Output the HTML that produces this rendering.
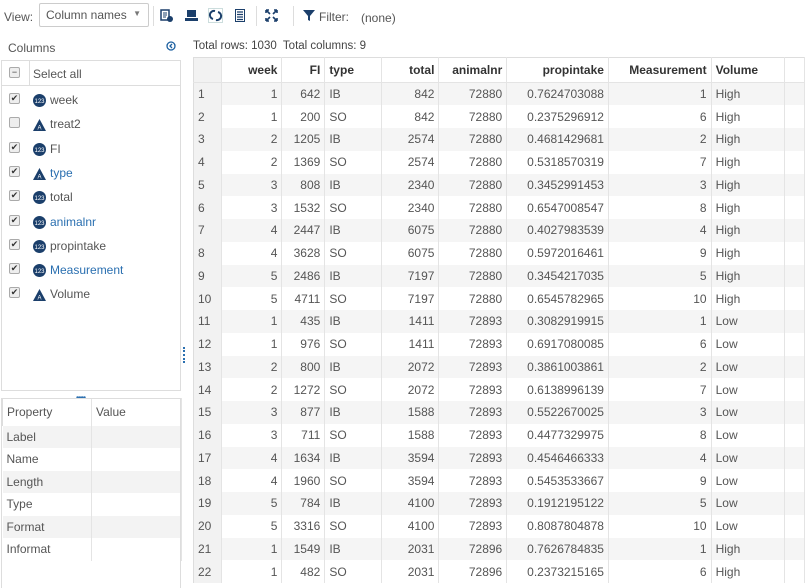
<!DOCTYPE html>
<html><head><meta charset="utf-8"><style>
*{box-sizing:border-box;margin:0;padding:0}
body{width:805px;height:584px;overflow:hidden;background:#fff;font-family:"Liberation Sans",sans-serif;font-size:12px;color:#555;position:relative}
.a{position:absolute}
.sep{position:absolute;top:6px;width:1px;height:20px;background:#ddd}
.ico{position:absolute;top:9px;width:13px;height:13px}
.cb{position:absolute;left:9px;width:11px;height:11px;border:1px solid #aaa;border-radius:2px;background:#eee;font-size:9px;line-height:9px;text-align:center;color:#333}
.li{position:absolute;left:33px;height:16px;line-height:16px;font-size:12px;white-space:nowrap}
.li svg{vertical-align:-3px;margin-right:4px}
.blue{color:#2a6fb0}
table{border-collapse:collapse;table-layout:fixed}
#g{position:absolute;left:193px;top:57px}
#g td,#g th{height:22.75px;border-right:1px solid #e4e4e4;padding:0 4px;white-space:nowrap;overflow:hidden;font-size:12px}
#g th{height:25px;color:#333;font-weight:bold;text-align:right;border-top:1px solid #ddd;border-bottom:1px solid #e4e4e4;background:#fff}
#g td{text-align:right}
#g td:first-child,#g th:first-child{text-align:left;background:#f2f2f2;border-left:1px solid #ddd}
#g td.l,#g th.l{text-align:left}
#g tr.o td{background:#f5f5f5}
#g tr.o td:first-child{background:#f2f2f2}
#p{position:absolute;left:2px;top:398px;width:179px}
#p td{height:22.5px;padding:0 4px;border-right:1px solid #e4e4e4;font-size:12px;color:#555}
#p tr.o td{background:#f3f3f3}
</style></head><body>
<div class="a" style="left:4px;top:10px;font-size:12px;color:#555">View:</div>
<div class="a" style="left:39px;top:3px;width:110px;height:24px;border:1px solid #ccc;border-radius:2px;padding:4px 6px;color:#555">Column names<span class="a" style="right:7px;top:5px;font-size:8px;color:#777">▼</span></div>
<div class="sep" style="left:153px"></div>
<svg class="ico" style="left:160px" viewBox="0 0 13 13"><rect x="1" y="1" width="8" height="10" fill="none" stroke="#1b3f6b" stroke-width="1.5"/><path d="M3 4h4M3 6h4M3 8h3" stroke="#1b3f6b"/><circle cx="10" cy="10" r="3" fill="#1b3f6b"/></svg>
<svg class="ico" style="left:185px" viewBox="0 0 13 13"><rect x="2" y="1" width="9" height="7" fill="#1b3f6b"/><rect x="0" y="9" width="13" height="3" fill="#1b3f6b"/></svg>
<svg class="ico" style="left:208px;width:15px;height:15px;top:8px" viewBox="0 0 15 15"><rect x=".5" y=".5" width="14" height="14" fill="none" stroke="#9bb" stroke-dasharray="1 1"/><path d="M7 3a4 4 0 0 0-2 8M8 12a4 4 0 0 0 2-8" fill="none" stroke="#1b3f6b" stroke-width="2"/></svg>
<svg class="ico" style="left:235px;width:10px" viewBox="0 0 10 13"><rect x=".5" y=".5" width="9" height="12" fill="none" stroke="#1b3f6b"/><path d="M2 3h6M2 5.5h6M2 8h6M2 10.5h6" stroke="#1b3f6b" stroke-width="1.3"/></svg>
<div class="sep" style="left:256px"></div>
<svg class="ico" style="left:265px" viewBox="0 0 13 13"><path d="M1 1l4 4M1 1v3M1 1h3M12 1l-4 4M12 1v3M12 1h-3M1 12l4-4M1 12v-3M1 12h3M12 12l-4-4M12 12v-3M12 12h-3" stroke="#1b3f6b" stroke-width="1.6" fill="none"/></svg>
<div class="sep" style="left:293px"></div>
<svg class="ico" style="left:303px;width:12px" viewBox="0 0 12 13"><path d="M0 1h12L7 7v5L5 11V7z" fill="#1b3f6b"/></svg>
<div class="a" style="left:319px;top:10px">Filter:</div>
<div class="a" style="left:361px;top:11px">(none)</div>

<div class="a" style="left:8px;top:41px">Columns</div>
<svg class="a" style="left:166px;top:41px" width="10" height="10" viewBox="0 0 10 10"><circle cx="5" cy="5" r="4" fill="none" stroke="#1b5fa0" stroke-width="1.3"/><path d="M6 3L4 5l2 2" fill="none" stroke="#1b5fa0" stroke-width="1.3"/></svg>
<div class="a" style="left:193px;top:40px;font-size:11.5px;color:#444">Total rows: 1030&nbsp; Total columns: 9</div>

<div class="a" style="left:1px;top:60px;width:180px;height:331px;border:1px solid #ddd"></div>
<div class="a" style="left:1px;top:60px;width:180px;height:26px;border-bottom:1px solid #ddd"></div>
<div class="a" style="left:29px;top:61px;width:1px;height:25px;background:#ddd"></div>
<div class="cb" style="top:67px">−</div>
<div class="li" style="top:66px">Select all</div>
<div id="list"></div>
<div class="a" style="left:76px;top:393px;font-size:8px;color:#2a6fb0;letter-spacing:-1px">•••••</div>
<div class="a" style="left:183px;top:347px;width:2px;height:16px;border-left:2px dotted #2a6fb0"></div>

<table id="p">
<colgroup><col style="width:89px"><col style="width:90px"></colgroup>
<tr style="height:27px"><td style="border-top:1px solid #ddd;border-left:1px solid #ddd">Property</td><td style="border-top:1px solid #ddd">Value</td></tr>
<tr class="o"><td>Label</td><td></td></tr><tr><td>Name</td><td></td></tr><tr class="o"><td>Length</td><td></td></tr><tr><td>Type</td><td></td></tr><tr class="o"><td>Format</td><td></td></tr><tr><td>Informat</td><td></td></tr>
</table>
<div class="a" style="left:1px;top:398px;width:180px;height:190px;border:1px solid #ddd;border-bottom:none"></div>

<table id="g">
<colgroup><col style="width:28px"><col style="width:61px"><col style="width:43px"><col style="width:57px"><col style="width:58px"><col style="width:68px"><col style="width:102px"><col style="width:103px"><col style="width:74px"><col style="width:20px"></colgroup>
<tbody id="gb"><tr><th></th><th>week</th><th>FI</th><th class="l">type</th><th>total</th><th>animalnr</th><th>propintake</th><th>Measurement</th><th class="l">Volume</th><th></th></tr></tbody>
</table>
<script>
var L=[["week",0,0],["treat2",1,0],["FI",0,0],["type",1,1],["total",0,0],["animalnr",0,1],["propintake",0,0],["Measurement",0,1],["Volume",1,0]];
var h="";L.forEach(function(c,i){var y=92+i*24.3;var un=c[0]=="treat2";
var ic=c[1]?'<svg width="13" height="12" viewBox="0 0 13 12"><path d="M6.5 0L13 12H0z" fill="#1b3f6b"/><text x="6.5" y="10.5" font-size="6" fill="#fff" text-anchor="middle" font-family="Liberation Sans">A</text></svg>':'<svg width="13" height="13" viewBox="0 0 13 13"><circle cx="6.5" cy="6.5" r="6.5" fill="#1b3f6b"/><text x="6.5" y="9" font-size="6" fill="#fff" text-anchor="middle" font-family="Liberation Sans">123</text></svg>';
h+='<div class="cb" style="top:'+(y+1)+'px">'+(un?'':'✔')+'</div><div class="li'+(c[2]?' blue':'')+'" style="top:'+y+'px">'+ic+c[0]+'</div>';});
document.getElementById("list").innerHTML=h;
var D=[[1,642,"IB",842,72880,"0.7624703088",1,"High"],[1,200,"SO",842,72880,"0.2375296912",6,"High"],[2,1205,"IB",2574,72880,"0.4681429681",2,"High"],[2,1369,"SO",2574,72880,"0.5318570319",7,"High"],[3,808,"IB",2340,72880,"0.3452991453",3,"High"],[3,1532,"SO",2340,72880,"0.6547008547",8,"High"],[4,2447,"IB",6075,72880,"0.4027983539",4,"High"],[4,3628,"SO",6075,72880,"0.5972016461",9,"High"],[5,2486,"IB",7197,72880,"0.3454217035",5,"High"],[5,4711,"SO",7197,72880,"0.6545782965",10,"High"],[1,435,"IB",1411,72893,"0.3082919915",1,"Low"],[1,976,"SO",1411,72893,"0.6917080085",6,"Low"],[2,800,"IB",2072,72893,"0.3861003861",2,"Low"],[2,1272,"SO",2072,72893,"0.6138996139",7,"Low"],[3,877,"IB",1588,72893,"0.5522670025",3,"Low"],[3,711,"SO",1588,72893,"0.4477329975",8,"Low"],[4,1634,"IB",3594,72893,"0.4546466333",4,"Low"],[4,1960,"SO",3594,72893,"0.5453533667",9,"Low"],[5,784,"IB",4100,72893,"0.1912195122",5,"Low"],[5,3316,"SO",4100,72893,"0.8087804878",10,"Low"],[1,1549,"IB",2031,72896,"0.7626784835",1,"High"],[1,482,"SO",2031,72896,"0.2373215165",6,"High"]];
var r="";D.forEach(function(d,i){r+='<tr'+(i%2==0?' class="o"':'')+'><td>'+(i+1)+'</td><td>'+d[0]+'</td><td>'+d[1]+'</td><td class="l">'+d[2]+'</td><td>'+d[3]+'</td><td>'+d[4]+'</td><td>'+d[5]+'</td><td>'+d[6]+'</td><td class="l">'+d[7]+'</td><td></td></tr>';});
document.getElementById("gb").insertAdjacentHTML("beforeend",r);
</script>
</body></html>
